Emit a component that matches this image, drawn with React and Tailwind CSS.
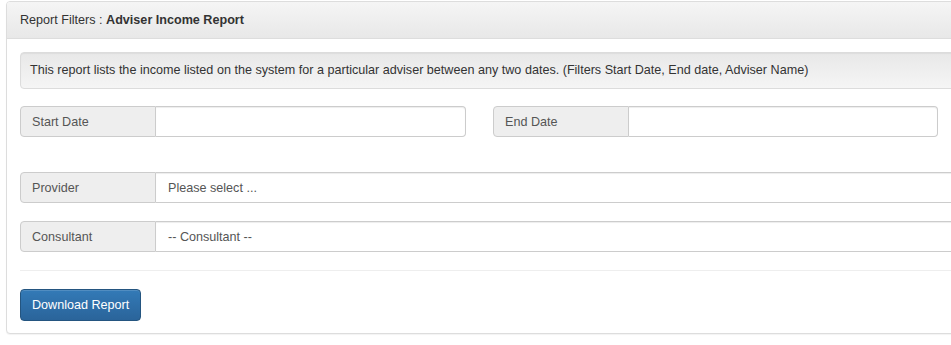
export default function App() {
  const font = { fontFamily: '"Liberation Sans", Arial, sans-serif' };
  return (
    <div className="w-[951px] h-[345px] overflow-hidden bg-white text-[12.6px] text-[#333]" style={font}>
      <div className="ml-[6px] mt-[1px] w-[980px] border border-[#ddd] rounded-[4px] bg-white shadow-[0_1px_1px_rgba(0,0,0,0.05)]">
        <div className="h-[37px] flex items-center px-[13px] border-b border-[#ddd] rounded-t-[3px] bg-gradient-to-b from-[#f5f5f5] to-[#e8e8e8]">
          <span>Report Filters :&nbsp;</span>
          <span className="font-bold">Adviser Income Report</span>
        </div>
        <div className="px-[13px] pt-[13px] pb-[12px]">
          <div className="h-[37px] flex items-center px-[9px] border border-[#dcdcdc] rounded-[4px] bg-gradient-to-b from-[#e8e8e8] to-[#f5f5f5] shadow-[inset_0_1px_1px_rgba(0,0,0,0.05)]">
            This report lists the income listed on the system for a particular adviser between any two dates. (Filters Start Date, End date, Adviser Name)
          </div>

          <div className="mt-[17px] flex gap-[27px]">
            <InputGroup label="Start Date" className="w-[446px]" />
            <InputGroup label="End Date" className="w-[445px]" />
          </div>

          <InputGroup label="Provider" value="Please select ..." className="mt-[35px] w-full" />
          <InputGroup label="Consultant" value="-- Consultant --" className="mt-[18px] w-full" />

          <div className="mt-[18px] border-t border-[#eee]" />

          <button className="mt-[18px] h-[32px] px-[11px] rounded-[4px] border border-[#245580] text-white text-[12.6px] bg-gradient-to-b from-[#337ab7] to-[#2a649a] shadow-[inset_0_1px_0_rgba(255,255,255,0.15)]">
            Download Report
          </button>
        </div>
      </div>
    </div>
  );
}

function InputGroup({ label, value, className = "" }) {
  return (
    <div className={"flex h-[31px] " + className}>
      <div className="w-[136px] shrink-0 flex items-center px-[11px] pt-[1px] bg-[#eee] border border-[#ccc] rounded-l-[4px] text-[#555]">
        {label}
      </div>
      <div className="flex-1 flex items-center px-[12px] pt-[1px] bg-white border border-l-0 border-[#ccc] rounded-r-[4px] text-[#555] shadow-[inset_0_1px_1px_rgba(0,0,0,0.075)]">
        {value}
      </div>
    </div>
  );
}
